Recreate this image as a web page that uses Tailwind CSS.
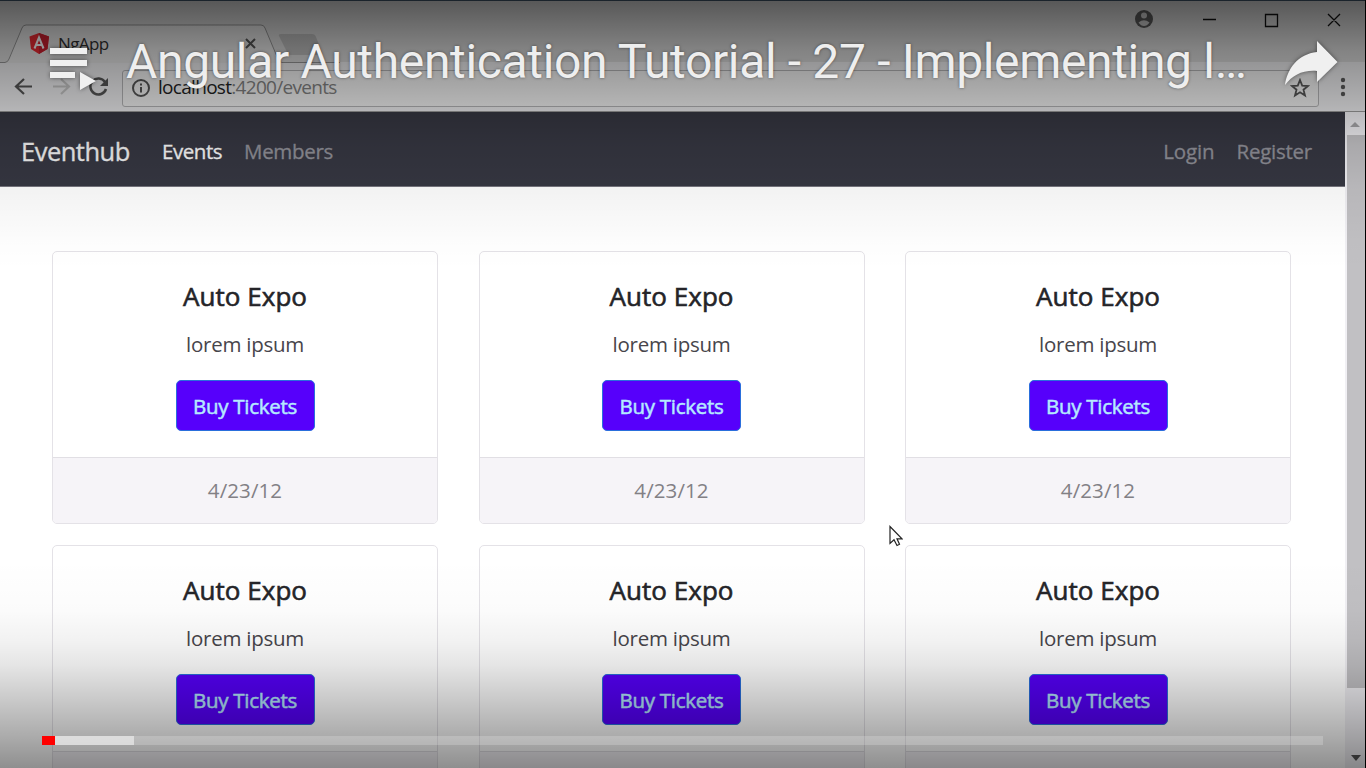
<!DOCTYPE html>
<html lang="en">
<head>
<meta charset="utf-8">
<title>Angular Authentication Tutorial - 27</title>
<script src="https://cdn.jsdelivr.net/npm/@tailwindcss/browser@4"></script>
</head>
<body class="w-[1366px] h-[768px] overflow-hidden bg-black font-['Open_Sans',sans-serif]">
<div class="relative w-[1366px] h-[768px] overflow-hidden">
  <div class="flex flex-col w-[1365px] h-[768px] bg-white border-t border-[#41576b]">
    <!-- tab strip -->
    <header class="relative flex flex-none justify-between h-[61px] bg-[#dadada]">
      <svg class="block" width="340" height="62" viewBox="0 1 340 62" fill="none">
        <path d="M0 62.500H5Q8 62 9 59L22 28Q23 25 26 25H261Q264 25 265 28L278 59Q279 62 282 62.500V64H0Z" fill="#e6e6e6"/>
        <path d="M0 62.500H5Q8 62 9 59L22 28Q23 25 26 25H261Q264 25 265 28L278 59Q279 62 282 62.500H340" stroke="#959595"/>
        <path d="M281 34H312Q315 34 316 37L322 52Q323 55 320 55H291Q288 55 287 52L279 36Q278 34 281 34Z" fill="#bdbdbd"/>
        <path d="M39 33L49 36.500L47.500 49L39 54L31 49L29.500 36.500Z" fill="#ee2c34"/>
        <path d="M39 33L49 36.500L47.500 49L39 54Z" fill="#cc2030"/>
        <path d="M34.500 48.500L39 37.500L43.500 48.500M36 45H42" stroke="#fff" stroke-width="2"/>
        <path d="M246 39L255 48M255 39L246 48" stroke="#555" stroke-width="2"/>
      </svg>
      <span class="absolute left-[58px] top-[31px] text-[17px] leading-[24px] tracking-[-0.6px] text-[#303030]">NgApp</span>
      <svg class="block" width="240" height="40" viewBox="1125 1 240 40" fill="none">
        <circle cx="1144" cy="19" r="9" fill="#5c5c5c"/><circle cx="1144" cy="15.500" r="3" fill="#d0d0d0"/>
        <path d="M1138.500 22.500Q1144 18 1149.500 22.500Q1147 26 1144 26Q1141 26 1138.500 22.500Z" fill="#d0d0d0"/>
        <path d="M1203 19.500H1216M1265.500 14.500H1277.500V26.500H1265.500ZM1328 14L1340 26M1340 14L1328 26" stroke="#111" stroke-width="1.300"/>
      </svg>
    </header>
    <!-- toolbar -->
    <div class="flex flex-none items-center h-[50px] bg-[#ececee] border-b border-[#999] pl-3">
      <svg class="flex-none" width="110" height="49" viewBox="12 62 110 49" fill="none" stroke-width="2.200">
        <path d="M32 86.500H16M24 79L16 86.500L24 94" stroke="#555"/>
        <path d="M53 86.500H68M61 79L69 86.500L61 94" stroke="#c4c4c4"/>
        <path d="M105 82A8 8 0 1 0 106 89" stroke="#555" stroke-width="2.500"/><path d="M108 78V86H100Z" fill="#555"/>
      </svg>
      <div class="flex flex-none items-center w-[1197px] h-[37px] mt-[3px] border border-[#b2b2b4] rounded-[3px] pl-2 bg-[#f0f0f0]">
        <svg class="flex-none" width="20" height="20" viewBox="0 0 20 20" fill="none" stroke="#555" stroke-width="2"><circle cx="10" cy="10" r="8"/><path d="M10 9V14.500M10 5.500V7.500"/></svg>
        <span class="ml-[7px] -mt-0.5 text-[19px] tracking-[-0.7px] text-[#808080]"><span class="text-[#222]">localhost</span>:4200/events</span>
        <svg class="ml-auto mr-2" width="20" height="20" viewBox="0 0 20 20" fill="none" stroke="#555" stroke-width="1.800"><path d="M10 2L12.200 7.600L18 8L13.500 11.700L15 17.500L10 14.300L5 17.500L6.500 11.700L2 8L7.800 7.600Z"/></svg>
      </div>
      <svg class="ml-5" width="8" height="20" viewBox="0 0 8 20" fill="#585858"><circle cx="4" cy="3" r="2.200"/><circle cx="4" cy="10" r="2.200"/><circle cx="4" cy="17" r="2.200"/></svg>
    </div>
    <div class="flex flex-1 min-h-0">
      <!-- web page -->
      <div class="w-[1345px] overflow-hidden">
        <nav class="flex items-center h-[75px] pl-[21px] pr-[33px] bg-[#363742] border-b border-[#77767f] text-[20.500px] text-[#8f8f97] [-webkit-text-stroke:0.3px]">
          <span class="w-[141px] pt-[5px] text-[25.500px] tracking-[-0.5px] text-[#f2f2f2]">Eventhub</span>
          <span class="w-[82px] pt-[5px] tracking-[-0.45px] text-[#fafafa]">Events</span>
          <span class="pt-[5px] tracking-[-0.3px]">Members</span>
          <span class="ml-auto mr-[22px] pt-[5px] tracking-[-0.1px]">Login</span>
          <span class="pt-[5px] tracking-[-0.25px]">Register</span>
        </nav>
        <main id="events" class="grid grid-cols-[386px_386px_386px] gap-x-[40.500px] gap-y-[21px] pl-[52px] pt-[64px]"></main>
      </div>
      <!-- scrollbar -->
      <div class="flex flex-col items-center flex-1 bg-[#f1f0f4]">
        <svg class="flex-none mt-px" width="20" height="22" viewBox="0 0 20 22"><path d="M5 14L10 9L15 14Z" fill="#a5a4a7"/></svg>
        <div class="w-[18px] h-[553px] flex-none self-end bg-[#c1c0c3]"></div>
        <svg class="mt-auto mb-[7px] ml-0.5" width="10" height="6" viewBox="0 0 10 6"><path d="M0 0H10L5 6Z" fill="#555"/></svg>
      </div>
    </div>
  </div>

  <!-- player shading -->
  <div class="absolute inset-x-0 top-0 h-[270px] bg-[linear-gradient(to_bottom,rgba(0,0,0,0.6)_0px,rgba(0,0,0,0.4)_50px,rgba(0,0,0,0.25)_105px,rgba(0,0,0,0.12)_145px,rgba(0,0,0,0.05)_187px,rgba(0,0,0,0.01)_240px,transparent_270px)]"></div>
  <div class="absolute inset-x-0 bottom-0 h-[208px] bg-[linear-gradient(to_bottom,transparent_0px,rgba(0,0,0,0.015)_50px,rgba(0,0,0,0.05)_80px,rgba(0,0,0,0.1)_105px,rgba(0,0,0,0.21)_140px,rgba(0,0,0,0.34)_180px,rgba(0,0,0,0.44)_208px)]"></div>

  <!-- player title -->
  <svg class="absolute left-[48px] top-[45px] overflow-visible drop-shadow-[0_0_2px_rgba(0,0,0,0.5)]" width="50" height="48" viewBox="48 45 50 48" fill="#f0f0f0"><path d="M50 48H87V54H50ZM50 60H87V66H50ZM50 72H75V78H50ZM80 72L96 81L80 90Z"/></svg>
  <div class="absolute left-[126px] top-[32px] whitespace-nowrap font-[Roboto,sans-serif] text-[48px] leading-[60px] tracking-[-0.34px] text-[#eee] [text-shadow:0_0_3px_rgba(0,0,0,0.5)]">Angular Authentication Tutorial - 27 - Implementing l…</div>
  <svg class="absolute left-[1280px] top-[36px] overflow-visible drop-shadow-[0_0_2px_rgba(0,0,0,0.5)]" width="60" height="54" viewBox="1280 36 60 54" fill="#f0f0f0"><path d="M1317 41L1337.500 62L1317 82V71C1302 70 1293 75 1285 85C1287 69 1298 54 1317 52Z"/></svg>

  <!-- progress -->
  <div class="absolute left-[42px] top-[736px] flex w-[1281px] h-[9px] bg-white/20">
    <div class="w-[13px] bg-[#f00]"></div><div class="w-[79px] bg-white/50"></div>
  </div>
  <!-- pointer -->
  <svg class="absolute left-[889px] top-[525px]" width="14" height="22" viewBox="0 0 14 22" fill="#fff" stroke="#222" stroke-width="1.200"><path d="M1 1.500V18.500L5 14.800L8 20.500L10.500 19.300L8 13.800H13Z"/></svg>
</div>
<script>
document.getElementById('events').innerHTML = Array.from({length: 6}, () => `
<article class="flex flex-col h-[273px] border border-[#e4e2e7] rounded-[5px] overflow-hidden text-center bg-white">
  <div class="flex flex-col items-center h-[207px] pt-[26px]">
    <h5 class="text-[26px] leading-[36px] text-[#242428] tracking-[0.05px] [-webkit-text-stroke:0.6px]">Auto Expo</h5>
    <p class="mt-[14px] text-[20.500px] leading-[32px] tracking-[-0.25px] text-[#47454b]">lorem ipsum</p>
    <a class="mt-5 w-[139px] h-[51px] rounded-[5px] border border-[#2a6fdc] bg-[#5600fb] text-[20.500px] leading-[51px] tracking-[-0.3px] text-[#b5e9ff] [-webkit-text-stroke:0.5px]">Buy Tickets</a>
  </div>
  <div class="flex-1 border-t border-[#e1dfe4] bg-[#f6f4f8] text-[20.500px] leading-[65px] tracking-[0.1px] text-[#828085]">4/23/12</div>
</article>`).join('');
</script>
</body>
</html>
